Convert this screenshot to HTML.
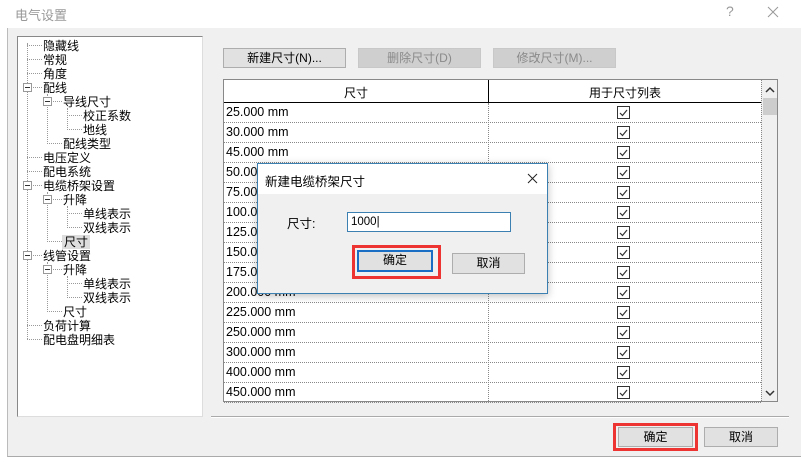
<!DOCTYPE html>
<html><head><meta charset="utf-8"><style>
*{margin:0;padding:0;box-sizing:border-box}
body{width:801px;height:462px;background:#fff;font-family:"Liberation Sans","Noto Sans CJK SC",sans-serif;font-size:12px;color:#000;position:relative;overflow:hidden}
.a{position:absolute}
.win{left:7px;top:0;width:794px;height:457px;background:#f0f0f0;border-left:1px solid #bbb;border-bottom:1px solid #aaa}
.title{left:7px;top:0;width:794px;height:28px;background:#fff}
.btn{position:absolute;background:#e1e1e1;border:1px solid #adadad;text-align:center;line-height:18px;font-size:12px}
.dis{color:#8a8a8a;background:#cfcfcf;border-color:#c8c8c8}
.tree{left:17px;top:36px;width:186px;height:381px;background:#fff;border:1px solid #888;border-right-color:#ddd;border-bottom-color:#ddd}
.ti{position:absolute;font-size:12px;line-height:14px;white-space:nowrap}
.dl{position:absolute;border-top:1px dotted #999;height:0}
.dv{position:absolute;border-left:1px dotted #999;width:0}
.pm{position:absolute;width:9px;height:9px;border:1px solid #999;background:#fff}
.pm:after{content:"";position:absolute;left:1px;top:3px;width:5px;height:1px;background:#333}
.tbl{left:223px;top:79px;width:555px;height:323px;background:#fff;border:1px solid #888;overflow:hidden}
.row{position:absolute;left:0;width:537px;height:20px;border-bottom:1px dotted #888}
.row span{position:absolute;left:2px;top:2px;font-size:12.5px}
.cb{position:absolute;left:393px;top:3px;width:13px;height:13px;border:1px solid #333}
</style></head><body>
<div class="a win"></div>
<div class="a title"></div>
<div class="a" style="left:15px;top:5px;font-size:13px;color:#999">电气设置</div>
<div class="a" style="left:726px;top:3px;font-size:14px;color:#999">?</div>
<svg class="a" style="left:767px;top:6px" width="12" height="12"><path d="M1 1L11 11M11 1L1 11" stroke="#999" stroke-width="1"/></svg>

<div class="a tree">
<div class="ti" style="left:25px;top:2px">隐藏线</div>
<div class="ti" style="left:25px;top:16px">常规</div>
<div class="ti" style="left:25px;top:30px">角度</div>
<div class="ti" style="left:25px;top:44px">配线</div>
<div class="ti" style="left:45px;top:58px">导线尺寸</div>
<div class="ti" style="left:65px;top:72px">校正系数</div>
<div class="ti" style="left:65px;top:86px">地线</div>
<div class="ti" style="left:45px;top:100px">配线类型</div>
<div class="ti" style="left:25px;top:114px">电压定义</div>
<div class="ti" style="left:25px;top:128px">配电系统</div>
<div class="ti" style="left:25px;top:142px">电缆桥架设置</div>
<div class="ti" style="left:45px;top:156px">升降</div>
<div class="ti" style="left:65px;top:170px">单线表示</div>
<div class="ti" style="left:65px;top:184px">双线表示</div>
<div class="ti" style="left:44px;top:198px;background:#ddd;padding:0 2px">尺寸</div>
<div class="ti" style="left:25px;top:212px">线管设置</div>
<div class="ti" style="left:45px;top:226px">升降</div>
<div class="ti" style="left:65px;top:240px">单线表示</div>
<div class="ti" style="left:65px;top:254px">双线表示</div>
<div class="ti" style="left:45px;top:268px">尺寸</div>
<div class="ti" style="left:25px;top:282px">负荷计算</div>
<div class="ti" style="left:25px;top:296px">配电盘明细表</div>
<div class="dv" style="left:9px;top:6px;height:296px"></div>
<div class="dv" style="left:29px;top:57px;height:48px"></div>
<div class="dv" style="left:49px;top:71px;height:20px"></div>
<div class="dv" style="left:29px;top:155px;height:48px"></div>
<div class="dv" style="left:49px;top:169px;height:20px"></div>
<div class="dv" style="left:29px;top:225px;height:48px"></div>
<div class="dv" style="left:49px;top:239px;height:20px"></div>
<div class="dl" style="left:9px;top:8px;width:15px"></div>
<div class="dl" style="left:9px;top:22px;width:15px"></div>
<div class="dl" style="left:9px;top:36px;width:15px"></div>
<div class="dl" style="left:9px;top:50px;width:15px"></div>
<div class="dl" style="left:29px;top:64px;width:15px"></div>
<div class="dl" style="left:49px;top:78px;width:15px"></div>
<div class="dl" style="left:49px;top:92px;width:15px"></div>
<div class="dl" style="left:29px;top:106px;width:15px"></div>
<div class="dl" style="left:9px;top:120px;width:15px"></div>
<div class="dl" style="left:9px;top:134px;width:15px"></div>
<div class="dl" style="left:9px;top:148px;width:15px"></div>
<div class="dl" style="left:29px;top:162px;width:15px"></div>
<div class="dl" style="left:49px;top:176px;width:15px"></div>
<div class="dl" style="left:49px;top:190px;width:15px"></div>
<div class="dl" style="left:29px;top:204px;width:15px"></div>
<div class="dl" style="left:9px;top:218px;width:15px"></div>
<div class="dl" style="left:29px;top:232px;width:15px"></div>
<div class="dl" style="left:49px;top:246px;width:15px"></div>
<div class="dl" style="left:49px;top:260px;width:15px"></div>
<div class="dl" style="left:29px;top:274px;width:15px"></div>
<div class="dl" style="left:9px;top:288px;width:15px"></div>
<div class="dl" style="left:9px;top:302px;width:15px"></div>
<div class="pm" style="left:5px;top:46px"></div>
<div class="pm" style="left:25px;top:60px"></div>
<div class="pm" style="left:5px;top:144px"></div>
<div class="pm" style="left:25px;top:158px"></div>
<div class="pm" style="left:5px;top:214px"></div>
<div class="pm" style="left:25px;top:228px"></div>
</div>

<div class="btn" style="left:223px;top:48px;width:123px;height:20px">新建尺寸(N)...</div>
<div class="btn dis" style="left:358px;top:48px;width:123px;height:20px">删除尺寸(D)</div>
<div class="btn dis" style="left:493px;top:48px;width:123px;height:20px">修改尺寸(M)...</div>

<div class="a tbl">
<div class="a" style="left:0;top:0;width:537px;height:23px;border-bottom:1px solid #000;background:#fff"></div>
<div class="a" style="left:264px;top:0;height:23px;border-left:1px solid #000"></div>
<div class="a" style="left:0;top:4px;width:264px;text-align:center">尺寸</div>
<div class="a" style="left:265px;top:4px;width:272px;text-align:center">用于尺寸列表</div>
<div class="a" style="left:264px;top:23px;height:300px;border-left:1px dotted #888"></div>
<div class="a" style="left:537px;top:0;width:17px;height:323px;background:#f0f0f0;border-left:1px dotted #888"></div>
<div class="a" style="left:539px;top:18px;width:14px;height:17px;background:#cdcdcd"></div>
<svg class="a" style="left:541px;top:6px" width="10" height="8"><path d="M1 6L5 2L9 6" stroke="#333" stroke-width="1.5" fill="none"/></svg>
<svg class="a" style="left:541px;top:309px" width="10" height="8"><path d="M1 2L5 6L9 2" stroke="#333" stroke-width="1.5" fill="none"/></svg>
</div>
<div class="a" id="rows" style="left:224px;top:103px"></div>
<script>
var v=["25","30","45","50","75","100","125","150","175","200","225","250","300","400","450"],h="";
for(var i=0;i<v.length;i++){h+='<div class="row" style="top:'+(i*20)+'px"><span>'+v[i]+'.000 mm</span><div class="cb"><svg width="11" height="11" style="position:absolute;left:0;top:0"><path d="M2 6 L4.5 8.5 L9 3" stroke="#333" stroke-width="1.2" fill="none"/></svg></div></div>';}
document.getElementById('rows').innerHTML=h;
</script>

<div class="a" style="left:211px;top:416px;width:578px;border-top:1px solid #aaa;border-bottom:1px solid #fff"></div>
<div class="a" style="left:613px;top:423px;width:85px;height:28px;border:3px solid #e33"></div>
<div class="btn" style="left:618px;top:427px;width:75px;height:20px">确定</div>
<div class="btn" style="left:704px;top:427px;width:74px;height:20px">取消</div>

<div class="a" style="left:257px;top:163px;width:291px;height:131px;background:#f0f0f0;border:1px solid #3c7fb1;box-shadow:0 2px 8px rgba(0,0,0,.25)"></div>
<div class="a" style="left:258px;top:164px;width:289px;height:30px;background:#fff"></div>
<div class="a" style="left:265px;top:171px;font-size:12.5px">新建电缆桥架尺寸</div>
<svg class="a" style="left:527px;top:173px" width="11" height="11"><path d="M1 1L10 10M10 1L1 10" stroke="#222" stroke-width="1"/></svg>
<div class="a" style="left:287px;top:213px;font-size:12.5px">尺寸:</div>
<div class="a" style="left:347px;top:212px;width:164px;height:20px;background:#fff;border:1px solid #3c7fb1;padding:3px 3px;font-size:11.5px">1000|</div>
<div class="a" style="left:352px;top:245px;width:89px;height:34px;border:3px solid #e33"></div>
<div class="btn" style="left:357px;top:250px;width:76px;height:22px;border:2px solid #1a6fc4;line-height:17px">确定</div>
<div class="btn" style="left:452px;top:253px;width:73px;height:21px">取消</div>
</body></html>
